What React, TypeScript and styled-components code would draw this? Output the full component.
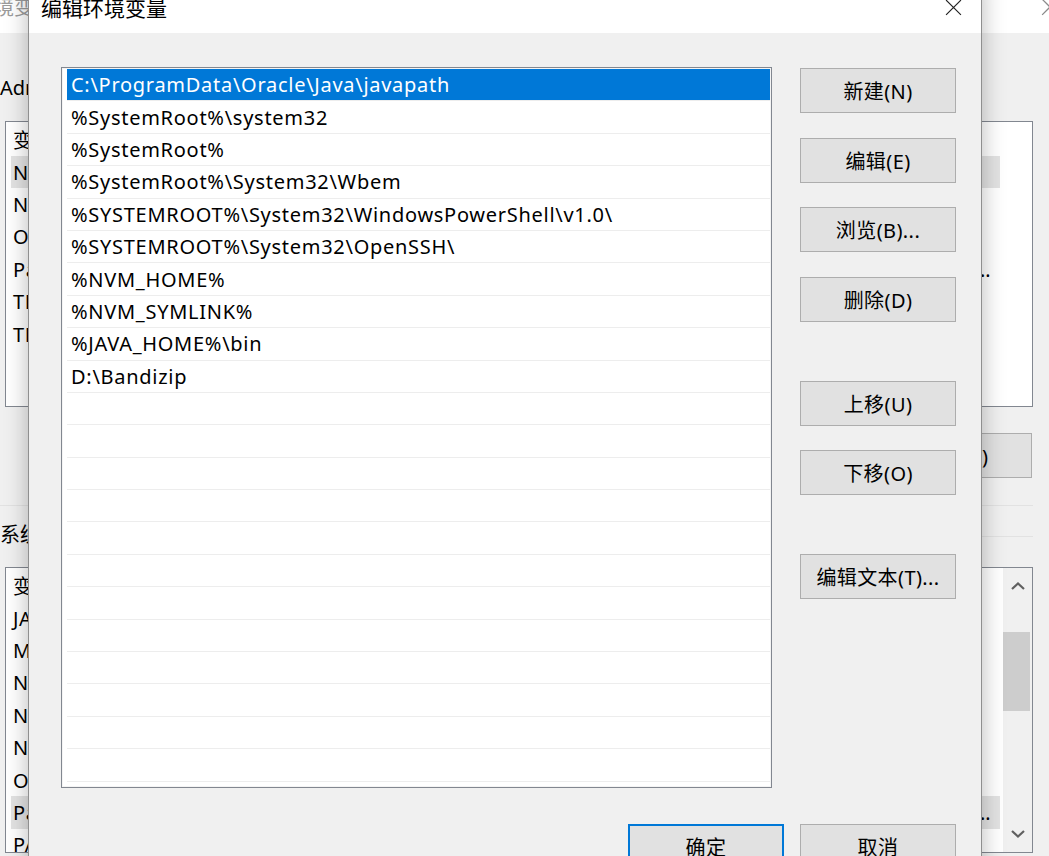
import React from 'react';
import styled, { createGlobalStyle } from 'styled-components';

const GlobalStyle = createGlobalStyle`
  html, body {
    margin: 0;
    padding: 0;
  }
  body {
    background: #f0f0f0;
    font-family: "Noto Sans", "Noto Sans CJK SC", sans-serif;
    color: #000;
  }
`;

const Desktop = styled.div`
  position: relative;
  width: 1049px;
  height: 856px;
  overflow: hidden;
  background: #f0f0f0;
`;

/* ---------- background window: 环境变量 ---------- */

const BackWindow = styled.div`
  display: flex;
  flex-direction: column;
  width: 100%;
`;

const TitleBar = styled.div`
  height: 53px;
  margin-top: -20px;
  background: #fff;
  display: flex;
  align-items: center;
  justify-content: space-between;
  flex-shrink: 0;
`;

const BackTitle = styled.span`
  margin-left: -26px;
  font-size: 20px;
  color: #9b9b9b;
`;

const BackClose = styled.div`
  margin-right: -10px;
  margin-top: 1px;
  display: flex;
`;

const BackBody = styled.div`
  display: flex;
  flex-direction: column;
  padding-right: 16px;
`;

const GroupLabel = styled.div<{ $top?: number }>`
  margin-top: ${(p) => p.$top ?? 0}px;
  font-size: 20px;
  line-height: 26px;
  height: 26px;
  white-space: nowrap;
`;

const GroupRow = styled.div`
  display: flex;
  align-items: center;
  gap: 8px;
  margin-top: 16px;
`;

const GroupLine = styled.div`
  flex: 1;
  height: 1px;
  background: #e2e2e2;
  margin-top: 2px;
`;

const Separator = styled.div`
  height: 1px;
  background: #e2e2e2;
  margin-top: 27px;
`;

const VarList = styled.div<{ $top: number }>`
  margin-left: 5px;
  margin-top: ${(p) => p.$top}px;
  height: 286px;
  box-sizing: border-box;
  border: 1px solid #828790;
  background: #fff;
  display: flex;
  overflow: hidden;
  flex-shrink: 0;
`;

const VarTable = styled.div`
  flex: 1;
  min-width: 0;
  display: flex;
  flex-direction: column;
  padding-left: 5px;
`;

const VarRow = styled.div<{ $selected?: boolean; $header?: boolean }>`
  flex-shrink: 0;
  width: 989px;
  height: ${(p) => (p.$header ? 34 : 32.4)}px;
  display: grid;
  grid-template-columns: 320px 669px;
  align-items: center;
  background: ${(p) => (p.$selected ? '#e3e3e3' : 'transparent')};
  font-size: 20px;
  letter-spacing: 0.6px;
`;

const VarCell = styled.div<{ $value?: boolean }>`
  padding-left: ${(p) => (p.$value ? 6 : 2)}px;
  padding-right: ${(p) => (p.$value ? 9 : 0)}px;
  white-space: nowrap;
  overflow: hidden;
  text-overflow: ellipsis;
`;

const ScrollBar = styled.div`
  width: 29px;
  flex-shrink: 0;
  background: #f0f0f0;
  display: flex;
  flex-direction: column;
  margin-left: 2px;
`;

const ScrollArrow = styled.div`
  height: 36px;
  display: flex;
  align-items: center;
  justify-content: center;
  flex-shrink: 0;
`;

const ScrollTrack = styled.div`
  flex: 1;
`;

const ScrollThumb = styled.div`
  width: 27px;
  height: 79px;
  margin-top: 28px;
  background: #cdcdcd;
`;

const BackButtonRow = styled.div`
  display: flex;
  justify-content: flex-end;
  gap: 16px;
  margin-top: 26px;
  padding-right: 1px;
`;

/* ---------- dialog: 编辑环境变量 ---------- */

const Dialog = styled.div`
  position: absolute;
  left: 28px;
  top: -20px;
  width: 954px;
  height: 900px;
  box-sizing: border-box;
  border: 1px solid #8f8f8f;
  background: #f0f0f0;
  box-shadow: 0 0 22px rgba(0, 0, 0, 0.28);
  display: flex;
  flex-direction: column;
`;

const DialogTitleBar = styled.div`
  height: 52px;
  flex-shrink: 0;
  background: #fff;
  display: flex;
  align-items: center;
  justify-content: space-between;
  padding: 0 19px 0 12px;
`;

const DialogTitle = styled.span`
  font-size: 21px;
`;

const DialogBody = styled.div`
  display: grid;
  grid-template-columns: 711px 156px;
  column-gap: 28px;
  padding: 34px 0 0 32px;
`;

const PathList = styled.div`
  height: 721px;
  box-sizing: border-box;
  border: 1px solid #828790;
  box-shadow: inset 0 0 0 1px #f4f4f4;
  background: #fff;
  padding: 1px 1px 0 5px;
  overflow: hidden;
`;

const PathRow = styled.div<{ $selected?: boolean }>`
  height: 32.4px;
  box-sizing: border-box;
  border-bottom: 1px solid #ededed;
  padding-left: 4px;
  display: flex;
  align-items: center;
  font-size: 20px;
  letter-spacing: 0.72px;
  white-space: nowrap;
  background: ${(p) => (p.$selected ? '#0078d7' : 'transparent')};
  color: ${(p) => (p.$selected ? '#fff' : '#000')};
`;

const SideButtons = styled.div`
  display: flex;
  flex-direction: column;
  padding-top: 1px;
`;

const Button = styled.div<{ $primary?: boolean; $gap?: number }>`
  width: 156px;
  height: 45px;
  box-sizing: border-box;
  margin-top: ${(p) => p.$gap ?? 0}px;
  border: ${(p) => (p.$primary ? '2px solid #0078d7' : '1px solid #adadad')};
  background: #e1e1e1;
  display: flex;
  align-items: center;
  justify-content: center;
  font-size: 20px;
  letter-spacing: 0.4px;
  white-space: nowrap;
  flex-shrink: 0;
`;

const FooterRow = styled.div`
  grid-column: 1 / -1;
  display: flex;
  justify-content: flex-end;
  gap: 16px;
  margin-top: 36px;
`;

const pathEntries = [
  'C:\\ProgramData\\Oracle\\Java\\javapath',
  '%SystemRoot%\\system32',
  '%SystemRoot%',
  '%SystemRoot%\\System32\\Wbem',
  '%SYSTEMROOT%\\System32\\WindowsPowerShell\\v1.0\\',
  '%SYSTEMROOT%\\System32\\OpenSSH\\',
  '%NVM_HOME%',
  '%NVM_SYMLINK%',
  '%JAVA_HOME%\\bin',
  'D:\\Bandizip',
];

const longPath =
  'C:\\Users\\Administrator\\AppData\\Local\\Microsoft\\WindowsApps;%NVM_HOME%;%NVM_SYMLINK%;C:\\Users\\Administrator\\AppData\\Roaming\\npm;D:\\Microsoft VS Code\\bin';

const userVars = [
  ['NVM_HOME', 'D:\\nvm'],
  ['NVM_SYMLINK', 'D:\\nodejs'],
  ['OneDrive', 'C:\\Users\\Administrator\\OneDrive'],
  ['Path', longPath],
  ['TEMP', '%USERPROFILE%\\AppData\\Local\\Temp'],
  ['TMP', '%USERPROFILE%\\AppData\\Local\\Temp'],
];

const systemVars = [
  ['JAVA_HOME', 'D:\\Java\\jdk1.8.0_301'],
  ['MAVEN_HOME', 'D:\\apache-maven-3.8.4'],
  ['NUMBER_OF_PROCESSORS', '8'],
  ['NVM_HOME', 'D:\\nvm'],
  ['NVM_SYMLINK', 'D:\\nodejs'],
  ['OS', 'Windows_NT'],
  ['Path', longPath],
  ['PATHEXT', '.COM;.EXE;.BAT;.CMD;.VBS;.VBE;.JS;.JSE;.WSF;.WSH;.MSC'],
];

function CloseIcon({ color, size }: { color: string; size: number }): JSX.Element {
  return (
    <svg width={size} height={size} viewBox="0 0 16 16">
      <path d="M1 1 L15 15 M15 1 L1 15" stroke={color} strokeWidth="1.1" fill="none" />
    </svg>
  );
}

function Chevron({ up }: { up?: boolean }): JSX.Element {
  return (
    <svg width="14" height="8" viewBox="0 0 14 8">
      <path d={up ? 'M1 7 L7 1.5 L13 7' : 'M1 1 L7 6.5 L13 1'} stroke="#606060" strokeWidth="2.2" fill="none" />
    </svg>
  );
}

function VariableTable({ rows, selected }: { rows: string[][]; selected: number }): JSX.Element {
  return (
    <VarTable>
      <VarRow $header>
        <VarCell>变量</VarCell>
        <VarCell $value>值</VarCell>
      </VarRow>
      {rows.map(([name, value], i) => (
        <VarRow key={name} $selected={i === selected}>
          <VarCell>{name}</VarCell>
          <VarCell $value>{value}</VarCell>
        </VarRow>
      ))}
    </VarTable>
  );
}

function App(): JSX.Element {
  const rows = [...pathEntries, ...Array(22 - pathEntries.length).fill('')];

  return (
    <Desktop>
      <GlobalStyle />
      <BackWindow>
        <TitleBar>
          <BackTitle>环境变量</BackTitle>
          <BackClose>
            <CloseIcon color="#8a8a8a" size={18} />
          </BackClose>
        </TitleBar>
        <BackBody>
          <GroupLabel $top={42}>Administrator 的用户变量(U)</GroupLabel>
          <VarList $top={20}>
            <VariableTable rows={userVars} selected={0} />
          </VarList>
          <BackButtonRow>
            <Button>新建(N)...</Button>
            <Button>编辑(E)...</Button>
            <Button>删除(D)</Button>
          </BackButtonRow>
          <Separator />
          <GroupRow>
            <GroupLabel>系统变量(S)</GroupLabel>
            <GroupLine />
          </GroupRow>
          <VarList $top={19}>
            <VariableTable rows={systemVars} selected={6} />
            <ScrollBar>
              <ScrollArrow>
                <Chevron up />
              </ScrollArrow>
              <ScrollTrack>
                <ScrollThumb />
              </ScrollTrack>
              <ScrollArrow>
                <Chevron />
              </ScrollArrow>
            </ScrollBar>
          </VarList>
        </BackBody>
      </BackWindow>

      <Dialog>
        <DialogTitleBar>
          <DialogTitle>编辑环境变量</DialogTitle>
          <CloseIcon color="#222" size={17} />
        </DialogTitleBar>
        <DialogBody>
          <PathList>
            {rows.map((entry, i) => (
              <PathRow key={i} $selected={i === 0}>
                {entry}
              </PathRow>
            ))}
          </PathList>
          <SideButtons>
            <Button>新建(N)</Button>
            <Button $gap={24.5}>编辑(E)</Button>
            <Button $gap={24.5}>浏览(B)...</Button>
            <Button $gap={24.5}>删除(D)</Button>
            <Button $gap={59}>上移(U)</Button>
            <Button $gap={24.5}>下移(O)</Button>
            <Button $gap={59}>编辑文本(T)...</Button>
          </SideButtons>
          <FooterRow>
            <Button $primary>确定</Button>
            <Button>取消</Button>
          </FooterRow>
        </DialogBody>
      </Dialog>
    </Desktop>
  );
}

export default App;
